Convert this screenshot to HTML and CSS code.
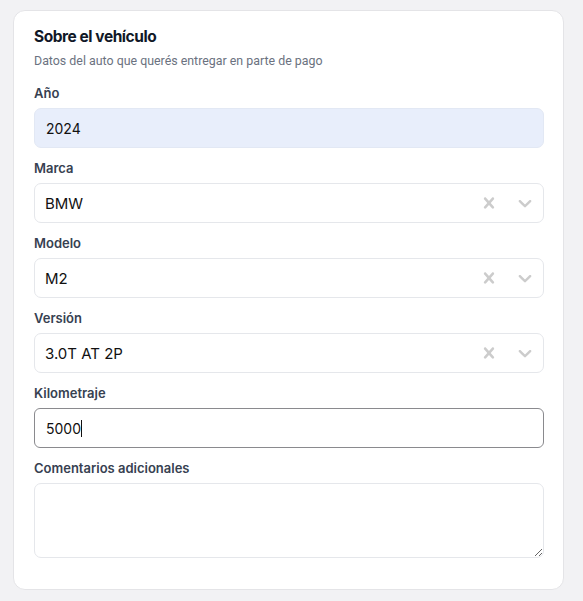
FILE: index.html
```html
<!DOCTYPE html>
<html lang="es">
<head>
<meta charset="utf-8">
<title>Sobre el vehículo</title>
<link rel="stylesheet" href="styles.css">
</head>
<body>
<section class="card">
  <h2 class="title">Sobre el vehículo</h2>
  <p class="subtitle">Datos del auto que querés entregar en parte de pago</p>

  <div class="field">
    <label class="label">Año</label>
    <div class="input input-filled">2024</div>
  </div>

  <div class="field">
    <label class="label">Marca</label>
    <div class="select">
      <span class="select-value">BMW</span>
      <span class="indicators">
        <svg class="icon" viewBox="0 0 20 20"><path d="M14.348 14.849c-0.469 0.469-1.229 0.469-1.697 0l-2.651-3.030-2.651 3.029c-0.469 0.469-1.229 0.469-1.697 0-0.469-0.469-0.469-1.229 0-1.697l2.758-3.15-2.759-3.152c-0.469-0.469-0.469-1.228 0-1.697s1.228-0.469 1.697 0l2.652 3.031 2.651-3.031c0.469-0.469 1.228-0.469 1.697 0s0.469 1.229 0 1.697l-2.758 3.152 2.758 3.15c0.469 0.469 0.469 1.229 0 1.698z"/></svg>
        <svg class="icon" viewBox="0 0 20 20"><path d="M4.516 7.548c0.436-0.446 1.043-0.481 1.576 0l3.908 3.747 3.908-3.747c0.533-0.481 1.141-0.446 1.574 0 0.436 0.445 0.408 1.197 0 1.615-0.406 0.418-4.695 4.502-4.695 4.502-0.217 0.223-0.502 0.335-0.787 0.335s-0.57-0.112-0.789-0.335c0 0-4.287-4.084-4.695-4.502s-0.436-1.17 0-1.615z"/></svg>
      </span>
    </div>
  </div>

  <div class="field">
    <label class="label">Modelo</label>
    <div class="select">
      <span class="select-value">M2</span>
      <span class="indicators">
        <svg class="icon" viewBox="0 0 20 20"><path d="M14.348 14.849c-0.469 0.469-1.229 0.469-1.697 0l-2.651-3.030-2.651 3.029c-0.469 0.469-1.229 0.469-1.697 0-0.469-0.469-0.469-1.229 0-1.697l2.758-3.15-2.759-3.152c-0.469-0.469-0.469-1.228 0-1.697s1.228-0.469 1.697 0l2.652 3.031 2.651-3.031c0.469-0.469 1.228-0.469 1.697 0s0.469 1.229 0 1.697l-2.758 3.152 2.758 3.15c0.469 0.469 0.469 1.229 0 1.698z"/></svg>
        <svg class="icon" viewBox="0 0 20 20"><path d="M4.516 7.548c0.436-0.446 1.043-0.481 1.576 0l3.908 3.747 3.908-3.747c0.533-0.481 1.141-0.446 1.574 0 0.436 0.445 0.408 1.197 0 1.615-0.406 0.418-4.695 4.502-4.695 4.502-0.217 0.223-0.502 0.335-0.787 0.335s-0.57-0.112-0.789-0.335c0 0-4.287-4.084-4.695-4.502s-0.436-1.17 0-1.615z"/></svg>
      </span>
    </div>
  </div>

  <div class="field">
    <label class="label">Versión</label>
    <div class="select">
      <span class="select-value">3.0T AT 2P</span>
      <span class="indicators">
        <svg class="icon" viewBox="0 0 20 20"><path d="M14.348 14.849c-0.469 0.469-1.229 0.469-1.697 0l-2.651-3.030-2.651 3.029c-0.469 0.469-1.229 0.469-1.697 0-0.469-0.469-0.469-1.229 0-1.697l2.758-3.15-2.759-3.152c-0.469-0.469-0.469-1.228 0-1.697s1.228-0.469 1.697 0l2.652 3.031 2.651-3.031c0.469-0.469 1.228-0.469 1.697 0s0.469 1.229 0 1.697l-2.758 3.152 2.758 3.15c0.469 0.469 0.469 1.229 0 1.698z"/></svg>
        <svg class="icon" viewBox="0 0 20 20"><path d="M4.516 7.548c0.436-0.446 1.043-0.481 1.576 0l3.908 3.747 3.908-3.747c0.533-0.481 1.141-0.446 1.574 0 0.436 0.445 0.408 1.197 0 1.615-0.406 0.418-4.695 4.502-4.695 4.502-0.217 0.223-0.502 0.335-0.787 0.335s-0.57-0.112-0.789-0.335c0 0-4.287-4.084-4.695-4.502s-0.436-1.17 0-1.615z"/></svg>
      </span>
    </div>
  </div>

  <div class="field">
    <label class="label">Kilometraje</label>
    <div class="input input-focus">5000<span class="caret"></span></div>
  </div>

  <div class="field">
    <label class="label">Comentarios adicionales</label>
    <textarea class="textarea"></textarea>
  </div>
</section>
</body>
</html>
```

FILE: styles.css
```css
* { box-sizing: border-box; }

html, body {
  margin: 0;
  height: 100%;
}

body {
  background: #f2f2f4;
  padding: 10px 19px 0 13px;
  font-family: Inter, "Noto Sans", sans-serif;
  color: #111827;
}

.card {
  background: #ffffff;
  border: 1px solid #e4e4e7;
  border-radius: 12px;
  padding: 16px 19px 31px 20px;
}

.title {
  margin: 0 0 6px;
  font-size: 15.5px;
  line-height: 20px;
  font-weight: 700;
  letter-spacing: -0.45px;
  color: #111827;
}

.subtitle {
  margin: 0 0 16px;
  font-family: Roboto, Inter, sans-serif;
  font-size: 12.4px;
  line-height: 16px;
  color: #6b7280;
}

.field {
  margin-top: 12px;
}

.subtitle + .field {
  margin-top: 0;
}

.label {
  display: block;
  font-size: 13px;
  line-height: 16px;
  font-weight: 600;
  color: #374151;
  margin-bottom: 7px;
}

.input {
  height: 40px;
  border: 1px solid #e5e7eb;
  border-radius: 7px;
  padding: 0 11px;
  display: flex;
  align-items: center;
  font-size: 14px;
  color: #111111;
}

.input-filled {
  background: #e8eefb;
  border-color: #e2e8f4;
}

.input-focus {
  border-color: #8a8a8e;
  border-radius: 6px;
}

.caret {
  display: inline-block;
  width: 1px;
  height: 17px;
  background: #111111;
}

.select {
  height: 40px;
  border: 1px solid #e5e7eb;
  border-radius: 7px;
  padding: 0 7px 0 10px;
  display: flex;
  align-items: center;
  justify-content: space-between;
  font-size: 15px;
  color: #111111;
}

.indicators {
  display: flex;
  align-items: center;
  gap: 14px;
}

.icon {
  width: 22px;
  height: 22px;
  fill: #cccccc;
  display: block;
}

.textarea {
  display: block;
  width: 100%;
  height: 75px;
  border: 1px solid #e5e7eb;
  border-radius: 7px;
  margin: 0;
  padding: 8px 11px;
  font-family: Inter, sans-serif;
  font-size: 14px;
  resize: vertical;
  background: #ffffff;
}
```
